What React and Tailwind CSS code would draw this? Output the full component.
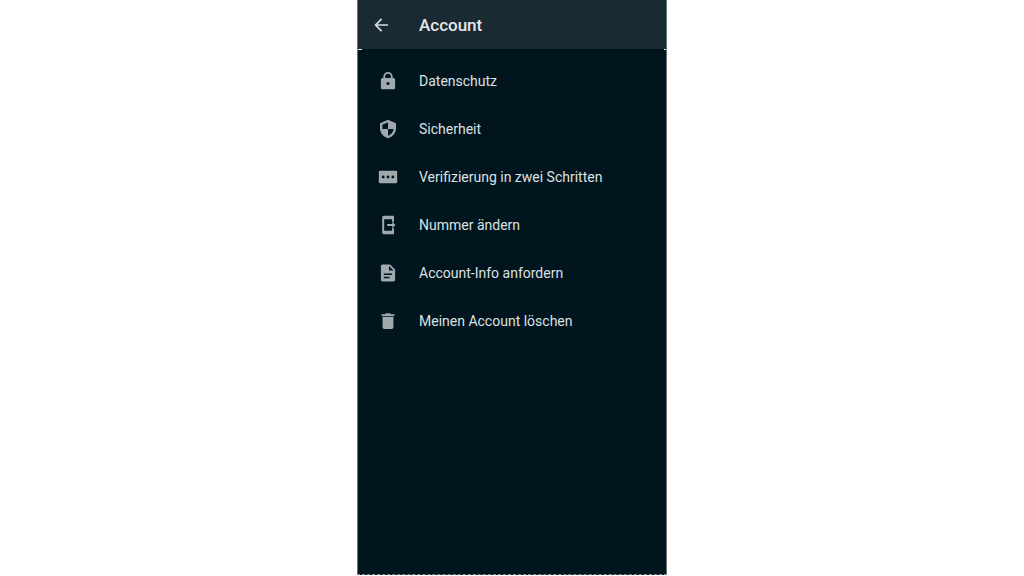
const ArrowLeftIcon = () => (
  <svg viewBox="0 0 24 24" className="size-5" fill="currentColor" aria-hidden="true">
    <path d="M20.500 11H7.830l5.590-5.590L12 4l-8 8 8 8 1.410-1.410L7.830 13H20.500z" />
  </svg>
);

const LockIcon = () => (
  <svg viewBox="0 0 24 24" className="size-5" aria-hidden="true">
    <path d="M7.500 10V6.700a4.500 4.500 0 0 1 9 0V10" fill="none" stroke="currentColor" strokeWidth="2.200" />
    <rect x="3.500" y="8.300" width="17" height="13.700" rx="2" fill="currentColor" />
    <circle cx="12" cy="15" r="1.900" fill="#00151e" />
  </svg>
);

const ShieldIcon = () => (
  <svg viewBox="0 0 24 24" className="size-5" aria-hidden="true">
    <path d="M12 .8 2.400 5v6.200c0 5.600 4.100 10.600 9.600 11.900 5.500-1.300 9.600-6.300 9.600-11.900V5z" fill="currentColor" />
    <path d="M12 4v8H5.200V6.900zM12 12h6.800c-.5 3.800-3.200 6.900-6.800 8z" fill="#00151e" />
  </svg>
);

const PinIcon = () => (
  <svg viewBox="0 0 24 24" className="size-5" aria-hidden="true">
    <rect x="1" y="4.500" width="22" height="15" rx="1.500" fill="currentColor" />
    <circle cx="6.200" cy="12" r="1.700" fill="#00151e" />
    <circle cx="12" cy="12" r="1.700" fill="#00151e" />
    <circle cx="17.800" cy="12" r="1.700" fill="#00151e" />
  </svg>
);

const ChangeNumberIcon = () => (
  <svg viewBox="0 0 24 24" className="size-5" aria-hidden="true">
    <path
      d="M19.200 8V1H7c-1.100 0-2 .9-2 2v18c0 1.100.9 2 2 2h12.200v-7h-2.400v3H7.400V5h9.400v3z"
      fill="currentColor"
    />
    <path d="M11 10.800h6V8.200l4 3.800-4 3.800v-2.600h-6z" fill="currentColor" />
  </svg>
);

const DocumentIcon = () => (
  <svg viewBox="0 0 24 24" className="size-5" aria-hidden="true">
    <path d="M14.500 1.800H5.500c-1.100 0-2 .9-2 2v16.400c0 1.100.9 2 2 2h13c1.100 0 2-.9 2-2V7.800z" fill="currentColor" />
    <path d="M13.200 3.500V9h5.500zM7 12.500h10v1.800H7zM7 16.500h7v1.800H7z" fill="#00151e" />
  </svg>
);

const TrashIcon = () => (
  <svg viewBox="0 0 24 24" className="size-5" fill="currentColor" aria-hidden="true">
    <path d="M5.500 19.500c0 1.100.9 2 2 2h9c1.100 0 2-.9 2-2V7h-13zM19.800 4h-4.300l-1-1.200h-5l-1 1.200H4.200v2h15.600z" />
  </svg>
);

const items = [
  { label: "Datenschutz", Icon: LockIcon },
  { label: "Sicherheit", Icon: ShieldIcon },
  { label: "Verifizierung in zwei Schritten", Icon: PinIcon },
  { label: "Nummer ändern", Icon: ChangeNumberIcon },
  { label: "Account-Info anfordern", Icon: DocumentIcon },
  { label: "Meinen Account löschen", Icon: TrashIcon },
];

const App = () => {
  return (
    <div className="flex min-h-screen justify-center bg-white pb-px font-['Roboto',sans-serif]">
      <main className="flex w-full max-w-[310px] flex-col border-x border-b border-x-[#66757c] border-b-[#7d8c91] bg-[#00151e] [border-bottom-style:dashed]">
        {/* HEADER */}
        <header className="flex h-[49px] items-center bg-[#1a2a33] pt-px">
          <button type="button" aria-label="Zurück" className="ml-[13px] text-[#d5dadd]">
            <ArrowLeftIcon />
          </button>
          <h1 className="ml-7 pt-0.5 text-[17px] font-medium text-[#e4e7e8]">Account</h1>
        </header>

        {/* corner ticks under the header */}
        <div className="flex h-px justify-between">
          <span className="h-px w-1 bg-[#e8eeee]" />
          <span className="h-px w-0.5 bg-[#e8eeee]" />
        </div>

        {/* SETTINGS */}
        <nav className="pt-[7px]">
          <ul>
            {items.map(({ label, Icon }) => (
              <li key={label}>
                <button
                  type="button"
                  className="flex h-12 w-full items-center gap-[21px] pl-5 text-left text-sm text-[#dde1e3]"
                >
                  <span className="text-[#9fa9ae]">
                    <Icon />
                  </span>
                  {label}
                </button>
              </li>
            ))}
          </ul>
        </nav>
      </main>
    </div>
  );
};

export default App;
